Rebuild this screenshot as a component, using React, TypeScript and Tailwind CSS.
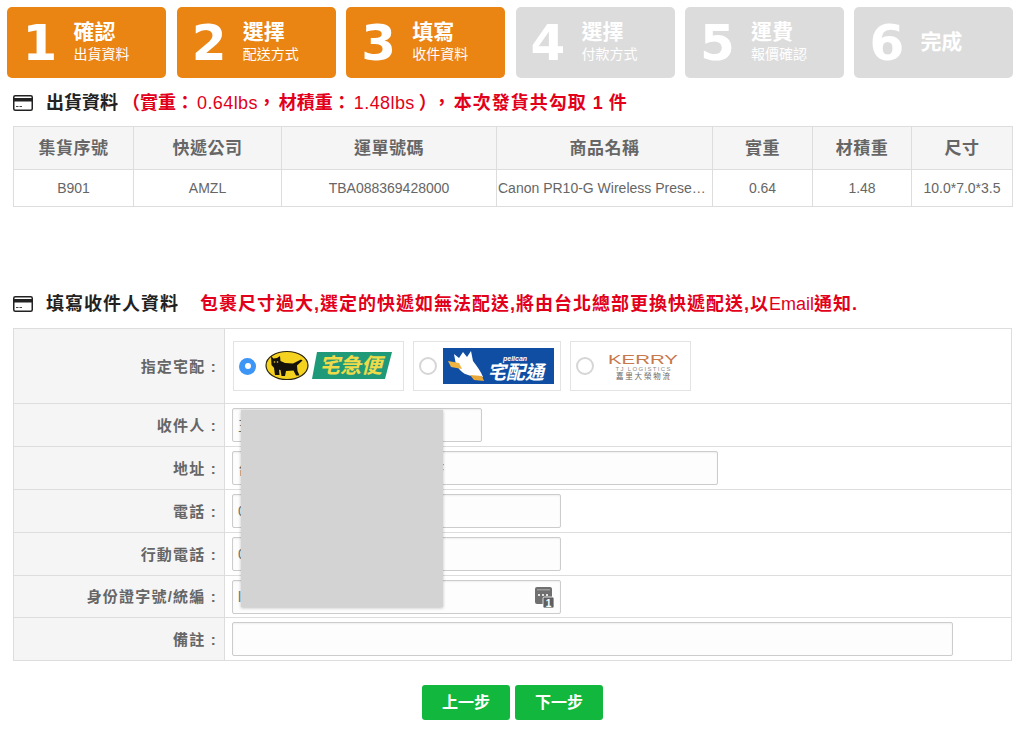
import React from "react";

const font = { fontFamily: '"Liberation Sans", "Noto Sans CJK TC", sans-serif' };

const steps = [
  { n: "1", title: "確認", sub: "出貨資料", on: true },
  { n: "2", title: "選擇", sub: "配送方式", on: true },
  { n: "3", title: "填寫", sub: "收件資料", on: true },
  { n: "4", title: "選擇", sub: "付款方式", on: false },
  { n: "5", title: "運費", sub: "報價確認", on: false },
  { n: "6", title: "完成", sub: "", on: false },
];

function CardIcon() {
  return (
    <svg width="20" height="16" viewBox="0 0 20 16" className="shrink-0">
      <rect x="0.75" y="0.75" width="18.5" height="14.5" rx="1.5" fill="#fff" stroke="#222" strokeWidth="1.5" />
      <rect x="1" y="3" width="18" height="3.5" fill="#222" />
      <rect x="3" y="11" width="2.5" height="1" fill="#444" />
      <rect x="6.5" y="11" width="2.5" height="1" fill="#444" />
    </svg>
  );
}

function StepBar() {
  return (
    <div className="ml-[7.4px] grid w-[1006px] grid-cols-6 gap-x-[10.4px] pt-[7px]">
      {steps.map((s) => (
        <div
          key={s.n}
          className={`flex h-[71px] items-center rounded-[5px] pl-[15px] text-white ${s.on ? "bg-[#ea8413]" : "bg-[#dcdcdc]"}`}
        >
          <span className="w-[51px] text-[50px] leading-none font-bold" style={{ fontFamily: '"DejaVu Sans", sans-serif' }}>
            {s.n}
          </span>
          <div className="mb-[2px] flex flex-col">
            <span className="text-[21px] leading-[24px] font-bold">{s.title}</span>
            {s.sub && <span className="text-[14px] leading-[20px]">{s.sub}</span>}
          </div>
        </div>
      ))}
    </div>
  );
}

const shipCols = ["w-[120px]", "w-[148px]", "w-[215px]", "w-[216px]", "w-[100px]", "w-[99px]", "w-[101px]"];
const shipHead = ["集貨序號", "快遞公司", "運單號碼", "商品名稱", "實重", "材積重", "尺寸"];
const shipRow = ["B901", "AMZL", "TBA088369428000", "Canon PR10-G Wireless Presenter", "0.64", "1.48", "10.0*7.0*3.5"];

function ShipTable() {
  return (
    <table className="ml-[13px] w-[999px] table-fixed border-collapse">
      <colgroup>
        {shipCols.map((c, i) => (
          <col key={i} className={c} />
        ))}
      </colgroup>
      <thead>
        <tr className="h-[43px] bg-[#f5f5f5]">
          {shipHead.map((h) => (
            <th key={h} className="border border-[#dddddd] pt-[2px] text-[17px] font-bold tracking-[0.5px] text-[#666666]">
              {h}
            </th>
          ))}
        </tr>
      </thead>
      <tbody>
        <tr className="h-[37px]">
          {shipRow.map((v, i) => (
            <td
              key={v}
              className={`truncate border border-[#dddddd] text-[14px] text-[#666666] ${i === 3 ? "px-[1px] text-left" : "text-center"}`}
            >
              {v}
            </td>
          ))}
        </tr>
      </tbody>
    </table>
  );
}

function Radio({ on }: { on?: boolean }) {
  if (on) {
    return (
      <span className="flex h-[17px] w-[17px] shrink-0 items-center justify-center rounded-full bg-[#3d95f6]">
        <span className="h-[6px] w-[6px] rounded-full bg-white" />
      </span>
    );
  }
  return <span className="h-[18px] w-[18px] shrink-0 rounded-full border-2 border-[#d6d6d6] bg-white" />;
}

function YamatoLogo() {
  return (
    <svg width="128" height="32" viewBox="0 0 128 32">
      <ellipse cx="22" cy="15.5" rx="21" ry="14" fill="#f5d21f" stroke="#2a2410" strokeWidth="1.2" />
      {/* mother cat with kitten */}
      <path
        d="M6 6 L8.5 8.5 L12 8 L15 6 L15.5 11 L20 13 L28 13.5 L36 9.5 L37.5 10.5 L32 15.5 L32.5 21 L34.5 25.5 L31 25.5 L28.5 20.5 L21 21 L20 26 L16.5 26 L15.5 20 L10 19 L6.5 15 Z"
        fill="#15120c"
      />
      <path d="M9 18 L14 19 L14.5 25 L10 25 Z" fill="#15120c" />
      <circle cx="9.5" cy="12" r="0.8" fill="#f5d21f" />
      <circle cx="12.5" cy="12" r="0.8" fill="#f5d21f" />
      <polygon points="52,2 127,2 120,29 47,29" fill="#1e9a78" />
      <text x="54" y="23" fontSize="21" fontWeight="700" fontStyle="italic" fill="#efdb4a" style={font}>
        宅急便
      </text>
    </svg>
  );
}

function PelicanLogo() {
  return (
    <svg width="111" height="36" viewBox="0 0 111 36">
      <rect width="111" height="36" fill="#0f4ea2" />
      <path d="M11 6 L16 10 L20 4 L24 9 L28 3 L30 13 C34 18 38 24 40 29 C32 29 22 28 17 22 L13 17 Z" fill="#ffffff" />
      <path d="M5 13 L16 15 L19 21 L8 19 Z" fill="#f0b440" />
      <path d="M27 27 L39 28 L41 33 L31 32 Z" fill="#e9a93a" />
      <text x="60" y="13" fontSize="7" fontStyle="italic" fontWeight="700" fill="#ffffff" style={font}>
        pelican
      </text>
      <text x="44" y="31" fontSize="19" fontWeight="700" fontStyle="italic" fill="#ffffff" style={font}>
        宅配通
      </text>
    </svg>
  );
}

function KerryLogo() {
  return (
    <svg width="72" height="28" viewBox="0 0 72 28">
      <text x="36" y="11.5" textAnchor="middle" fontSize="13" textLength="70" lengthAdjust="spacingAndGlyphs" fill="#c8784a" style={font}>
        KERRY
      </text>
      <text x="36" y="18.5" textAnchor="middle" fontSize="6" textLength="55" fill="#8a8a8a" style={font}>
        TJ LOGISTICS
      </text>
      <text x="36" y="27" textAnchor="middle" fontSize="7.5" textLength="54" fill="#666666" style={font}>
        嘉里大榮物流
      </text>
    </svg>
  );
}

function Carrier({ w, on, gap, children }: { w: string; on?: boolean; gap: string; children: React.ReactNode }) {
  return (
    <div className={`flex h-[50px] items-center border border-[#e3e3e3] pl-[5px] ${w} ${gap}`}>
      <Radio on={on} />
      {children}
    </div>
  );
}

function Field({ w, value, icon }: { w: string; value?: string; icon?: boolean }) {
  return (
    <div className={`relative h-[34px] ${w}`}>
      <input
        readOnly
        defaultValue={value}
        className="h-full w-full rounded-[2px] border border-[#cccccc] bg-[#fdfdfd] px-[5px] text-[14px] text-[#777777] shadow-[inset_0_1px_2px_rgba(0,0,0,0.06)] outline-none"
      />
      {icon && (
        <svg width="22" height="22" viewBox="0 0 22 22" className="absolute top-[7px] right-[4px]">
          <rect x="0" y="0" width="17" height="17" rx="2" fill="#6f6f6f" />
          <rect x="2" y="2" width="13" height="1.5" fill="#9a9a9a" />
          <circle cx="4" cy="8" r="1.1" fill="#fff" />
          <circle cx="8" cy="8" r="1.1" fill="#fff" />
          <circle cx="12" cy="8" r="1.1" fill="#fff" />
          <rect x="8" y="10" width="11" height="11" rx="1.5" fill="#5f5f5f" stroke="#fff" strokeWidth="0.8" />
          <text x="13.5" y="19.5" textAnchor="middle" fontSize="10" fontWeight="700" fill="#fff" style={font}>
            1
          </text>
        </svg>
      )}
    </div>
  );
}

const formRows = [
  { label: "收件人 :", h: "h-[43px]", field: <Field w="w-[250px]" value="王小明" /> },
  { label: "地址 :", h: "h-[43px]", field: <Field w="w-[486px]" value="台北市中正區忠孝東路一段1號5F" /> },
  { label: "電話 :", h: "h-[43px]", field: <Field w="w-[329px]" value="0223456789" /> },
  { label: "行動電話 :", h: "h-[43px]", field: <Field w="w-[329px]" value="0912345678" /> },
  { label: "身份證字號/統編 :", h: "h-[42px]", field: <Field w="w-[329px]" value="l23456789" icon /> },
  { label: "備註 :", h: "h-[43px]", field: <Field w="w-[721px]" /> },
];

const labelCell =
  "w-[211px] border border-[#dddddd] bg-[#f5f5f5] pt-[2px] pr-[7px] text-right text-[15px] font-bold tracking-[1.2px] text-[#666666]";

function ReceiverForm() {
  return (
    <div className="relative ml-[13px] w-[999px]">
      <table className="w-full table-fixed border-collapse">
        <colgroup>
          <col className="w-[211px]" />
          <col />
        </colgroup>
        <tbody>
          <tr className="h-[75px]">
            <td className={labelCell}>指定宅配 :</td>
            <td className="border border-[#dddddd] pl-[8px]">
              <div className="flex">
                <Carrier w="w-[171px]" on gap="mr-[9px] gap-[9px]">
                  <YamatoLogo />
                </Carrier>
                <Carrier w="w-[148px]" gap="mr-[9px] gap-[6px]">
                  <PelicanLogo />
                </Carrier>
                <Carrier w="w-[121px]" gap="gap-[13px]">
                  <KerryLogo />
                </Carrier>
              </div>
            </td>
          </tr>
          {formRows.map((r) => (
            <tr key={r.label} className={r.h}>
              <td className={labelCell}>{r.label}</td>
              <td className="border border-[#dddddd] pl-[7px]">{r.field}</td>
            </tr>
          ))}
        </tbody>
      </table>
      {/* privacy mask over the receiver's details */}
      <div className="absolute top-[82px] left-[228px] h-[197px] w-[202px] bg-[#d3d3d3] shadow-[0_1px_3px_rgba(0,0,0,0.25)]" />
    </div>
  );
}

export default function App() {
  return (
    <div className="h-[731px] w-[1024px] overflow-hidden bg-white" style={font}>
      <StepBar />

      <div className="ml-[13px] flex h-[48px] items-center gap-[13px] pt-[2px] text-[18px] font-bold text-[#222222]">
        <CardIcon />
        <p className="pt-[1px] whitespace-nowrap [text-spacing-trim:space-all]">
          出貨資料
          <span className="ml-[4px] text-[#e2001a]">
            （實重：
            <span className="ml-[3px] font-normal tracking-[0.4px]">0.64lbs</span>
            ，<span className="ml-[3px]">材積重：</span>
            <span className="ml-[3px] font-normal tracking-[0.4px]">1.48lbs</span>
            <span className="ml-[4px]">）</span>
            <span className="-ml-[4px]">，</span>
            <span className="ml-[3px] tracking-[1px]">本次發貨共勾取</span>
            <span className="ml-[6px]">1</span>
            <span className="ml-[6px]">件</span>
          </span>
        </p>
      </div>

      <ShipTable />

      <div className="mt-[79px] mb-[6px] ml-[13px] flex h-[36px] items-center gap-[13px] text-[18px] font-bold tracking-[1px] text-[#222222]">
        <CardIcon />
        <span className="w-[133px] whitespace-nowrap">填寫收件人資料</span>
        <span className="ml-[8px] whitespace-nowrap text-[#e2001a]">
          包裹尺寸過大,選定的快遞如無法配送,將由台北總部更換快遞配送,以<span className="font-normal tracking-normal">Email</span>通知.
        </span>
      </div>

      <ReceiverForm />

      <div className="mt-[24px] flex justify-center gap-[5px] pl-[1px]">
        <button className="h-[35px] w-[88px] rounded-[3px] bg-[#12b83e] text-[16px] font-bold text-white">上一步</button>
        <button className="h-[35px] w-[88px] rounded-[3px] bg-[#12b83e] text-[16px] font-bold text-white">下一步</button>
      </div>
    </div>
  );
}
